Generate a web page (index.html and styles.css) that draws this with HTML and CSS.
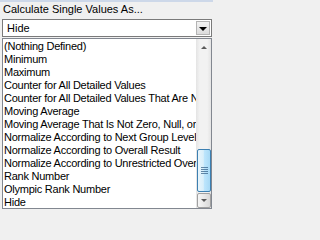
FILE: index.html
```html
<!DOCTYPE html>
<html>
<head>
<meta charset="utf-8">
<link rel="stylesheet" href="styles.css">
</head>
<body>
<div class="panel">
  <div class="label">Calculate Single Values As...</div>
  <div class="combo">
    <span class="combo-text">Hide</span>
    <span class="combo-btn"><span class="tri-down"></span></span>
  </div>
  <div class="list">
    <div class="items">
      <div class="item">(Nothing Defined)</div>
      <div class="item">Minimum</div>
      <div class="item">Maximum</div>
      <div class="item">Counter for All Detailed Values</div>
      <div class="item">Counter for All Detailed Values That Are Not Zero</div>
      <div class="item">Moving Average</div>
      <div class="item">Moving Average That Is Not Zero, Null, or Error</div>
      <div class="item">Normalize According to Next Group Level Result</div>
      <div class="item">Normalize According to Overall Result</div>
      <div class="item">Normalize According to Unrestricted Overall Result</div>
      <div class="item">Rank Number</div>
      <div class="item">Olympic Rank Number</div>
      <div class="item">Hide</div>
    </div>
    <div class="scrollbar">
      <div class="sb-up"><span class="tri-up-small"></span></div>
      <div class="sb-track"></div>
      <div class="sb-thumb">
        <span class="grip"></span>
        <span class="grip"></span>
        <span class="grip"></span>
        <span class="grip"></span>
      </div>
      <div class="sb-down"><span class="tri-down-small"></span></div>
    </div>
  </div>
</div>
</body>
</html>
```
FILE: styles.css
```css
html, body {
  margin: 0;
  padding: 0;
}
body {
  width: 213px;
  height: 211px;
  background: #f0f0f0;
  font-family: "Liberation Sans", Arial, sans-serif;
  font-size: 11px;
  color: #000;
  overflow: hidden;
}
.panel {
  border-top: 2px solid #cdd8e9;
  display: flex;
  flex-direction: column;
  padding: 0 1px 0 2px;
  height: 209px;
  box-sizing: border-box;
}
.label {
  height: 17px;
  line-height: 13px;
  padding: 1px 0 0 1px;
  box-sizing: border-box;
  white-space: nowrap;
}
.combo {
  height: 18px;
  border: 1px solid #7a7a7a;
  background: #fff;
  display: flex;
  align-items: center;
  box-sizing: border-box;
}
.combo-text {
  flex: 1;
  padding-left: 4px;
  line-height: 13px;
}
.combo-btn {
  width: 14px;
  height: 14px;
  margin-right: 1px;
  box-sizing: border-box;
  border: 1px solid #b4b4b4;
  background: linear-gradient(#f2f2f2, #dcdcdc);
  display: flex;
  align-items: center;
  justify-content: center;
}
.tri-down {
  width: 0;
  height: 0;
  border-left: 4px solid transparent;
  border-right: 4px solid transparent;
  border-top: 4px solid #000;
  margin-top: 1px;
}
.list {
  margin-top: 1px;
  flex: 1;
  border: 1px solid #828790;
  background: #fff;
  display: flex;
  overflow: hidden;
}
.items {
  flex: 1;
  overflow: hidden;
  padding-top: 1px;
}
.item {
  height: 13px;
  line-height: 13px;
  padding-left: 1px;
  white-space: nowrap;
  letter-spacing: -0.24px;
}
.scrollbar {
  width: 15px;
  display: flex;
  flex-direction: column;
  background: linear-gradient(to right, #e4e4e4, #f2f2f2 25%, #f2f2f2 75%, #e4e4e4);
}
.sb-up {
  height: 17px;
  display: flex;
  align-items: center;
  justify-content: center;
}
.tri-up-small {
  width: 0;
  height: 0;
  border-left: 3px solid transparent;
  border-right: 3px solid transparent;
  border-bottom: 3px solid #5a5a5a;
}
.tri-down-small {
  width: 0;
  height: 0;
  border-left: 3px solid transparent;
  border-right: 3px solid transparent;
  border-top: 3px solid #5a5a5a;
}
.sb-track {
  flex: 1;
}
.sb-thumb {
  height: 43px;
  margin: 0 0 1px 1px;
  border: 1px solid #3c7fb1;
  border-radius: 2px;
  box-sizing: border-box;
  background: linear-gradient(to right, #e8f5fc, #d9effa 45%, #bee6fd 50%, #a7d9f5);
  display: flex;
  flex-direction: column;
  align-items: center;
  justify-content: center;
  gap: 1px;
}
.grip {
  width: 7px;
  height: 1px;
  background: #2f5a82;
  opacity: 0.7;
}
.sb-down {
  height: 15px;
  margin: 0 0 0 1px;
  border: 1px solid #a0a0a0;
  border-radius: 2px;
  box-sizing: border-box;
  background: linear-gradient(to right, #f6f6f6, #e8e8e8 50%, #d8d8d8);
  display: flex;
  align-items: center;
  justify-content: center;
}
```
